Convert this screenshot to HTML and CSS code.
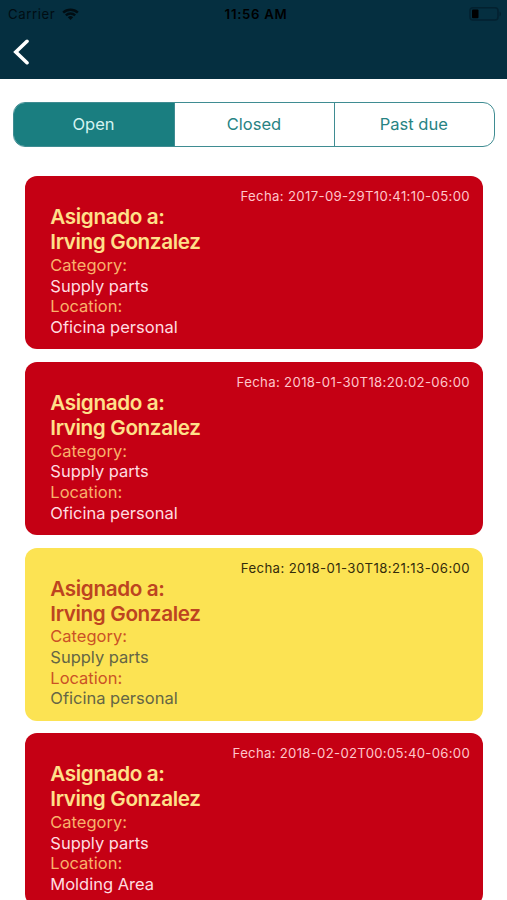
FILE: index.html
```html
<!DOCTYPE html>
<html lang="es">
<head>
<meta charset="utf-8">
<meta name="viewport" content="width=device-width, initial-scale=1">
<title>Open</title>
<link rel="stylesheet" href="styles.css">
</head>
<body>
<header class="header">
  <div class="status">
    <div class="carrier"><span>Carrier</span>
      <svg class="wifi" viewBox="0 0 17 12" width="17" height="12"><path d="M.3 3.7a11.8 11.8 0 0 1 16.4 0L15 5.5a9.4 9.4 0 0 0-13 0zM3 6.4a8 8 0 0 1 11 0l-1.7 1.8a5.5 5.5 0 0 0-7.6 0zM5.8 9.2a4 4 0 0 1 5.4 0L8.5 12z"/></svg>
    </div>
    <span class="time">11:56 AM</span>
    <svg class="battery" viewBox="0 0 33 14" width="33" height="14"><rect class="shell" x="1" y=".8" width="28" height="12.2" rx="3"/><path class="tip" d="M30.5 4.5c2 .8 2 4 0 4.8z"/><rect x="3" y="2.5" width="6.5" height="8.8" rx="1"/></svg>
  </div>
  <nav class="navbar"><svg viewBox="0 0 18 28" width="18" height="28"><path d="M16 3.3 4.8 14 16 24.7"/></svg></nav>
</header>
<main>
  <div class="tabs"><div class="tab active">Open</div><div class="tab">Closed</div><div class="tab">Past due</div></div>
  <div class="list">
    <article class="card"><time class="d1">Fecha: 2017-09-29T10:41:10-05:00</time><h2>Asignado a:</h2><h2>Irving Gonzalez</h2><p class="label">Category:</p><p>Supply parts</p><p class="label">Location:</p><p>Oficina personal</p></article>
    <article class="card"><time class="d2">Fecha: 2018-01-30T18:20:02-06:00</time><h2>Asignado a:</h2><h2>Irving Gonzalez</h2><p class="label">Category:</p><p>Supply parts</p><p class="label">Location:</p><p>Oficina personal</p></article>
    <article class="card yellow"><time class="d3">Fecha: 2018-01-30T18:21:13-06:00</time><h2>Asignado a:</h2><h2>Irving Gonzalez</h2><p class="label">Category:</p><p>Supply parts</p><p class="label">Location:</p><p>Oficina personal</p></article>
    <article class="card"><time class="d4">Fecha: 2018-02-02T00:05:40-06:00</time><h2>Asignado a:</h2><h2>Irving Gonzalez</h2><p class="label">Category:</p><p>Supply parts</p><p class="label">Location:</p><p>Molding Area</p></article>
  </div>
</main>
</body>
</html>
```
FILE: styles.css
```css
* { box-sizing: border-box; }
body { margin: 0; height: 900px; overflow: hidden; background: #fff; font-family: Inter, "Liberation Sans", sans-serif; font-size: 16.5px; }
.header { height: 79px; background: #052f40; color: #000; }
.status { height: 27px; display: grid; grid-template-columns: 1fr auto 1fr; align-items: center; padding: 0 5px 0 8px; font-size: 13.2px; }
.carrier { display: flex; align-items: center; gap: 7px; opacity: .7; letter-spacing: .6px; }
.time { margin-left: 2px; font-weight: 600; letter-spacing: .7px; }
.battery { justify-self: end; }
.shell { fill: none; stroke: #03212f; stroke-width: 1.5; }
.tip { fill: #03212f; }
.navbar { height: 52px; padding: 11px 0 0 11px; }
.navbar svg { display: block; }
.navbar path { fill: none; stroke: #fff; stroke-width: 3.6; stroke-linecap: round; stroke-linejoin: miter; }
.tabs { display: grid; grid-template-columns: 160px 160px 1fr; height: 45px; margin: 23px 12.5px 0 13px; border: 1px solid #3f8c92; border-radius: 12px; overflow: hidden; color: #288383; }
.tab { display: flex; align-items: center; justify-content: center; padding: 0 1px 1px 0; border-left: 1px solid #3f8c92; }
.tab.active { border-left: 0; background: #1a7e80; color: #d5f4f1; }
.list { display: flex; flex-direction: column; gap: 12.7px; margin: 29.2px 24.5px 0 25.3px; }
.card { height: 173px; padding: 12px 12.5px 12px 25px; border-radius: 12px; background: #c50014; color: #ffdce0; }
.card time { display: block; height: 17.2px; line-height: 16.6px; text-align: right; font-size: 13.2px; color: #ffc6cb; letter-spacing: .34px; }
.card .d3 { letter-spacing: .39px; }
.card .d4 { letter-spacing: .28px; }
h2, p { margin: 0; font-weight: 400; }
h2 { font-size: 20.7px; font-weight: 600; line-height: 24.8px; color: #ffe08a; letter-spacing: -.38px; }
p { line-height: 20.7px; }
.label { color: #f9b26b; }
.yellow { background: #fce353; color: #656645; }
.yellow time { color: #332b0b; }
.yellow h2 { color: #bd4420; }
.yellow .label { color: #cb5225; }
```
